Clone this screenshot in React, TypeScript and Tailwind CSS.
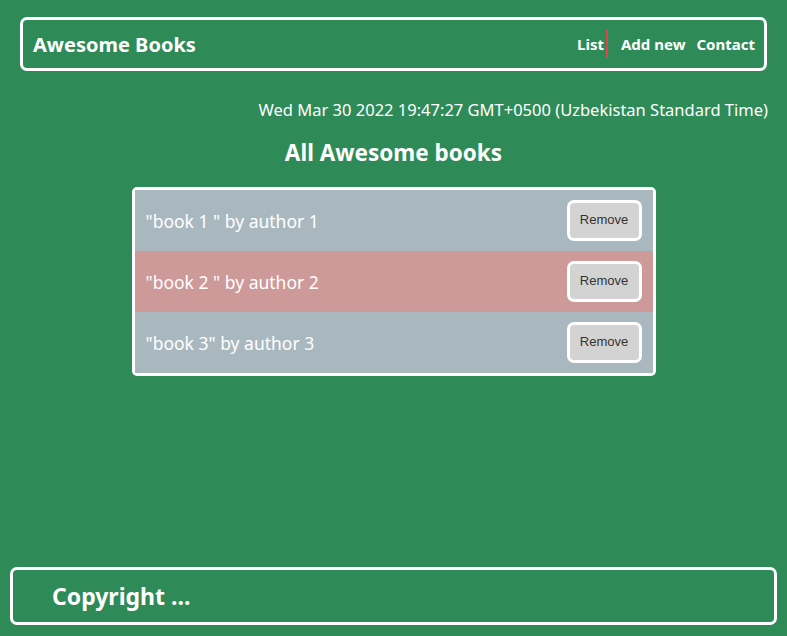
import React from 'react';

type Book = {
  id: number;
  title: string;
  author: string;
};

const books: Book[] = [
  { id: 1, title: 'book 1 ', author: 'author 1' },
  { id: 2, title: 'book 2 ', author: 'author 2' },
  { id: 3, title: 'book 3', author: 'author 3' },
];

const comic = "font-['Comic_Sans_MS','Noto_Sans',sans-serif]";

export default function App() {
  return (
    <div
      className={`flex min-h-[636px] flex-col bg-[#2e8b57] text-white ${comic}`}
    >
      <header className="mx-[20px] mt-[17px] flex h-[54px] items-center justify-between rounded-[7px] border-[3px] border-white pl-[10px] pr-[9px]">
        <h1 className="mt-[1px] text-[20px] font-bold">Awesome Books</h1>
        <nav className="flex items-center text-[15px] font-bold">
          <a className="flex h-[28px] items-center border-r-2 border-[#e0424f] pr-[2px] pt-[1px]">
            List
          </a>
          <a className="ml-[13px] pt-[1px]">Add new</a>
          <a className="ml-[11px] pt-[1px]">Contact</a>
        </nav>
      </header>

      <p className="mt-[27px] pr-[19px] text-right text-[16.5px]">
        Wed Mar 30 2022 19:47:27 GMT+0500 (Uzbekistan Standard Time)
      </p>

      <h2 className="mt-[13px] text-center text-[22.5px] font-bold">
        All Awesome books
      </h2>

      <ul className="mx-auto mt-[17px] w-[524px] overflow-hidden rounded-[5px] border-[3px] border-white">
        {books.map((book, i) => (
          <li
            key={book.id}
            className={`flex h-[61px] items-center justify-between pl-[11px] pr-[11px] text-[17.5px] ${
              i % 2 === 1 ? 'bg-[#cd9999]' : 'bg-[#a9b8bf]'
            }`}
          >
            <span className="pt-[3px]">
              "{book.title}" by {book.author}
            </span>
            <button className="h-[41px] w-[75px] rounded-[7px] border-[3px] border-white bg-[#d3d3d3] font-['Liberation_Sans',Arial,sans-serif] text-[13px] text-[#333]">
              Remove
            </button>
          </li>
        ))}
      </ul>

      <footer className="mx-[10px] mb-[11px] mt-auto flex h-[58px] items-center rounded-[7px] border-[3px] border-white pl-[39px]">
        <span className="text-[23px] font-bold">Copyright ...</span>
      </footer>
    </div>
  );
}
